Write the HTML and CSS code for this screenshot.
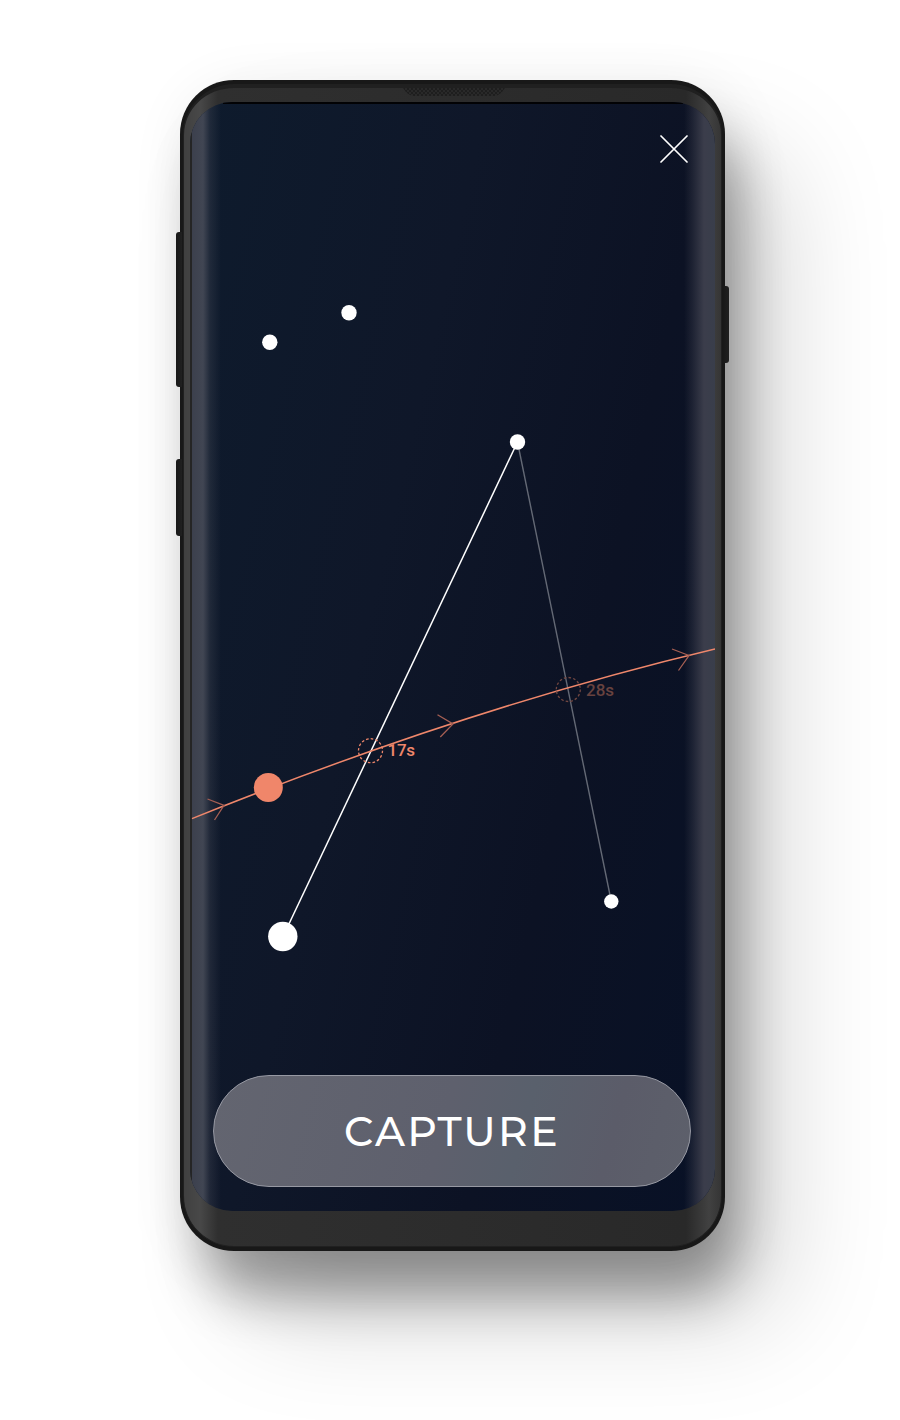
FILE: index.html
```html
<!DOCTYPE html>
<html lang="en">
<head>
<meta charset="utf-8">
<title>Capture</title>
<link rel="stylesheet" href="styles.css">
</head>
<body>
<main class="stage">
  <div class="phone">
    <span class="key key-volume"></span>
    <span class="key key-assistant"></span>
    <span class="key key-power"></span>
    <div class="bezel">
      <svg class="speaker" width="102" height="8" viewBox="0 0 102 8" aria-hidden="true">
        <defs>
          <pattern id="mesh" width="4" height="4" patternUnits="userSpaceOnUse">
            <rect width="4" height="4" fill="#292929"/>
            <path d="M0 0h2v2H0zM2 2h2v2H2z" fill="#1e1e1e"/>
          </pattern>
        </defs>
        <path d="M0 0H102Q97 8 91 8H11Q5 8 0 0Z" fill="url(#mesh)"/>
      </svg>
      <div class="screen">
        <svg class="sky" viewBox="190 102 525 1109" aria-hidden="true">
          <path class="link" d="M517.5 442L283 936.5"/>
          <path class="link link-dim" d="M517.5 442L611.3 901.5"/>
          <path class="orbit" d="M192 818.6Q467 708 715 649"/>
          <g class="arrows">
            <path d="M207.500 799L224 805.300L214.500 820"/>
            <path d="M437.500 714.800L453 724L440.300 737"/>
            <path d="M672 649L689 655.500L678.500 670.500"/>
          </g>
          <circle class="hit" cx="370.500" cy="750.700" r="12"/>
          <circle class="hit hit-dim" cx="568.300" cy="689.500" r="12"/>
          <text class="time" x="387.500" y="756" textLength="27.500">17s</text>
          <text class="time time-dim" x="586" y="696" textLength="28">28s</text>
          <g class="stars">
            <circle cx="269.800" cy="342.200" r="7.700"/>
            <circle cx="349" cy="312.800" r="7.700"/>
            <circle cx="517.500" cy="442" r="7.700"/>
            <circle cx="611.300" cy="901.500" r="7.200"/>
            <circle cx="282.800" cy="936.500" r="14.700"/>
          </g>
          <circle class="planet" cx="268.300" cy="787.400" r="14.500"/>
        </svg>
        <button class="close" aria-label="Close">
          <svg width="28" height="28" viewBox="0 0 28 28"><path d="M1 1L27 27M27 1L1 27"/></svg>
        </button>
        <button class="capture"><span class="capture-label">CAPTURE</span></button>
      </div>
    </div>
  </div>
</main>
</body>
</html>
```
FILE: styles.css
```css
* { box-sizing: border-box; }
body {
  margin: 0;
  background: #fff;
  font-family: Roboto, sans-serif;
}
.stage {
  width: 900px;
  height: 1420px;
  padding: 80px 0 0 180px;
  overflow: hidden;
}
.phone {
  position: relative;
  width: 545px;
  height: 1170.500px;
  padding: 4px 3px;
  border-radius: 54px;
  background: #181818;
  box-shadow:
    18px 52px 52px -6px rgba(0, 0, 0, .32),
    60px 70px 110px -4px rgba(0, 0, 0, .17),
    8px 12px 60px rgba(0, 0, 0, .09);
}
.key {
  position: absolute;
  width: 6px;
  background: linear-gradient(90deg, #181818, #202020);
}
.key-volume { left: -4px; top: 152px; height: 155px; border-radius: 3px 0 0 3px; }
.key-assistant { left: -4px; top: 379px; height: 77px; border-radius: 3px 0 0 3px; }
.key-power { right: -4px; top: 206px; height: 77px; border-radius: 0 3px 3px 0; }
.bezel {
  position: relative;
  display: flex;
  height: 1162.500px;
  padding: 14px 6px 35px;
  border: 1px solid #202020;
  border-top: 4px solid #202020;
  border-radius: 51px;
  background: linear-gradient(90deg, #404040 0, #484848 16px, #2f2f2f 34px, #2d2d2d 200px, #292929 502px, #414141 525px, #353535);
}
.speaker {
  position: absolute;
  left: 219px;
  top: 0;
}
.screen {
  position: relative;
  display: flex;
  flex-direction: column;
  justify-content: space-between;
  width: 525px;
  height: 1109px;
  flex: none;
  padding: 31px 25px 24px 23px;
  overflow: hidden;
  border-radius: 42px;
  background: linear-gradient(103deg, #0e1b2d 0%, #0f1729 38%, #0c1224 68%, #081126 100%);
}
.screen::before {
  content: "";
  position: absolute;
  inset: 0;
  background:
    linear-gradient(#020204, #020204) 50% 0 / 460px 2px no-repeat,
    linear-gradient(90deg, #252525 0, #252525 2px, #3c404d 2px, #414653 13px, rgba(65, 70, 83, .35) 20px, transparent 31px, transparent 494px, rgba(60, 62, 76, .35) 502px, #3b3d4b 514px, #393e4b);
}
.sky {
  position: absolute;
  left: 0;
  top: 0;
  width: 525px;
  height: 1109px;
}
.link { stroke: #fff; stroke-width: 1.5; }
.link-dim { stroke: #646975; stroke-width: 1.400; }
.orbit { fill: none; stroke: #ef876b; stroke-width: 1.500; }
.arrows { fill: none; stroke: #a65f53; stroke-width: 1.300; }
.hit { fill: none; stroke: #ef876b; stroke-width: 1.300; stroke-dasharray: 2.600 2.100; }
.hit-dim { stroke: #744842; }
.time { fill: #ef876b; font: 500 17px Roboto, sans-serif; }
.time-dim { fill: #68423f; }
.stars { fill: #fff; }
.planet { fill: #f0866a; }
button { position: relative; padding: 0; font: inherit; }
.close {
  display: block;
  align-self: flex-end;
  width: 28px;
  height: 28px;
  margin-right: 2px;
  margin-top: 2px;
  border: 0;
  background: none;
}
.close svg { display: block; }
.close path { stroke: #fff; stroke-width: 1.700; stroke-linecap: round; }
.capture {
  display: flex;
  align-items: center;
  justify-content: center;
  width: 478px;
  height: 112px;
  border: 1.500px solid #9799a3;
  border-radius: 56px;
  background: linear-gradient(105deg, #636570 0%, #5e606d 48%, #59606c 64%, #5b5c69 82%, #5d606b 100%);
}
.capture-label {
  color: #fff;
  font: 500 41px/50px Montserrat, Lato, sans-serif;
  letter-spacing: 2.300px;
}
```
